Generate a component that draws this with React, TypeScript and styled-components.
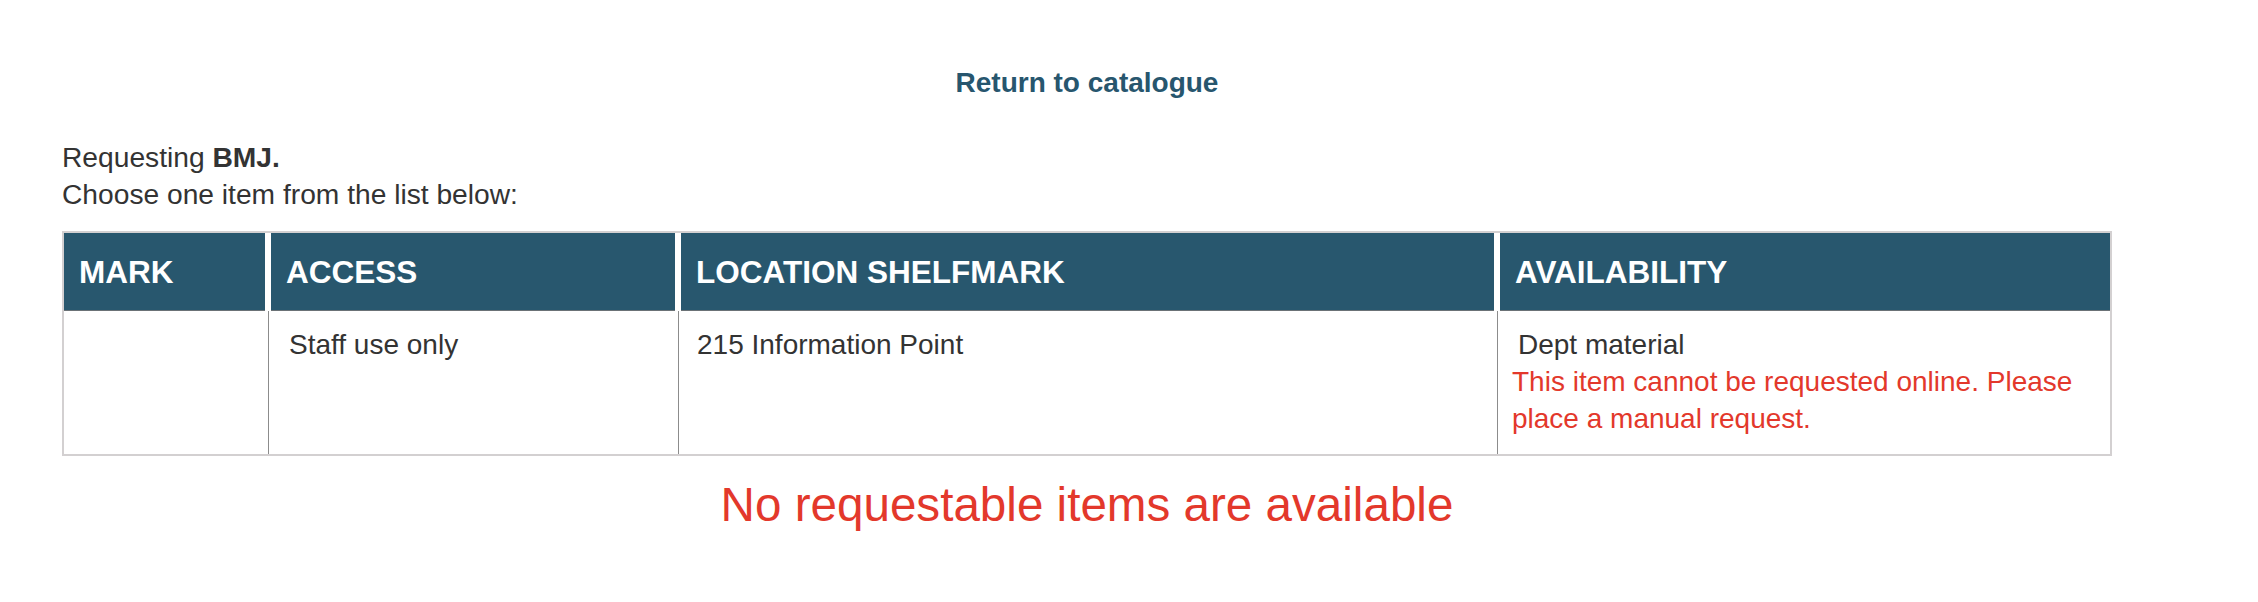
import React from "react";
import styled, { createGlobalStyle } from "styled-components";

const GlobalStyle = createGlobalStyle`
  html, body {
    margin: 0;
    padding: 0;
    background: #ffffff;
  }
  body {
    font-family: "Liberation Sans", Arial, Helvetica, sans-serif;
    color: #333333;
  }
`;

const Page = styled.main`
  width: 2050px;
  padding: 64px 0 0 62px;
  font-size: 28.2px;
  line-height: 37px;
`;

const Nav = styled.nav`
  display: flex;
  justify-content: center;
`;

const ReturnLink = styled.a`
  color: #27566e;
  font-size: 28px;
  font-weight: bold;
  text-decoration: none;
  cursor: pointer;
`;

const Intro = styled.p`
  margin: 38px 0 0;
`;

const Table = styled.table`
  margin-top: 18px;
  width: 2050px;
  table-layout: fixed;
  border-collapse: separate;
  border-spacing: 0;
  border: 2px solid #d3d0d1;
`;

const Col = styled.col<{ $w: number }>`
  width: ${(p) => p.$w}px;
`;

const HeadCell = styled.th`
  box-sizing: border-box;
  height: 78px;
  padding: 0 15px;
  background: #28576e;
  color: #ffffff;
  font-size: 31.5px;
  font-weight: bold;
  line-height: 1.15;
  text-align: left;
  text-transform: uppercase;
  vertical-align: middle;
  border-left: 3px solid #ffffff;
  border-right: 3px solid #ffffff;
  box-shadow: inset 0 -1px 0 #6b7276;
  &:first-child {
    border-left: none;
  }
  &:last-child {
    border-right: none;
  }
`;

const Cell = styled.td<{ $pl?: number }>`
  box-sizing: border-box;
  padding: 15px 14px 17px ${(p) => p.$pl ?? 14}px;
  vertical-align: top;
  font-size: 28px;
  line-height: 37px;
  color: #333333;
  border-left: 1px solid #8c8c8c;
  &:first-child {
    border-left: none;
  }
`;

const Lead = styled.span`
  padding-left: 6px;
`;

const Notice = styled.div`
  color: #e3382b;
`;

const Empty = styled.p`
  margin: 21px 0 0;
  text-align: center;
  font-size: 47.6px;
  line-height: 55px;
  color: #e3382b;
`;

const columns = [
  { key: "mark", label: "Mark", width: 204 },
  { key: "access", label: "Access", width: 410 },
  { key: "location", label: "Location Shelfmark", width: 819 },
  { key: "availability", label: "Availability", width: 613 },
];

export default function App() {
  return (
    <>
      <GlobalStyle />
      <Page>
        <Nav>
          <ReturnLink>Return to catalogue</ReturnLink>
        </Nav>
        <Intro>
          Requesting <b>BMJ.</b>
          <br />
          Choose one item from the list below:
        </Intro>
        <Table>
          <colgroup>
            {columns.map((c) => (
              <Col key={c.key} $w={c.width} />
            ))}
          </colgroup>
          <thead>
            <tr>
              {columns.map((c) => (
                <HeadCell key={c.key}>{c.label}</HeadCell>
              ))}
            </tr>
          </thead>
          <tbody>
            <tr>
              <Cell />
              <Cell $pl={20}>Staff use only</Cell>
              <Cell $pl={18}>215 Information Point</Cell>
              <Cell>
                <Lead>Dept material</Lead>
                <Notice>
                  This item cannot be requested online. Please place a manual
                  request.
                </Notice>
              </Cell>
            </tr>
          </tbody>
        </Table>
        <Empty>No requestable items are available</Empty>
      </Page>
    </>
  );
}
